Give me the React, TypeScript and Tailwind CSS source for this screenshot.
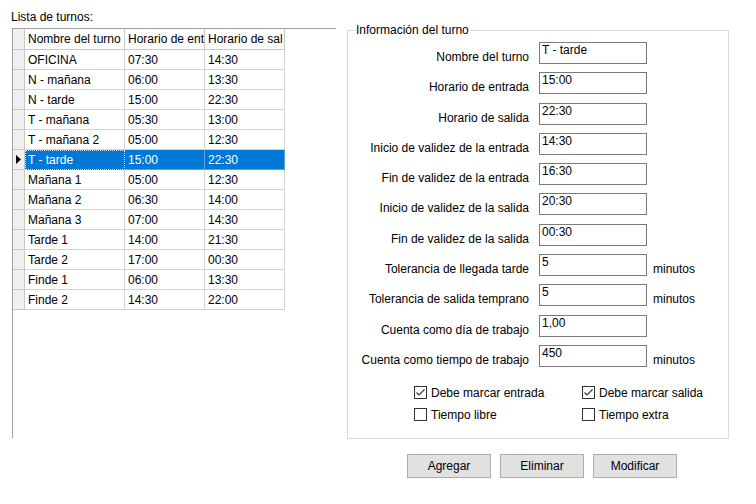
import React from "react";

const rows: [string, string, string][] = [
  ["OFICINA", "07:30", "14:30"],
  ["N - mañana", "06:00", "13:30"],
  ["N - tarde", "15:00", "22:30"],
  ["T - mañana", "05:30", "13:00"],
  ["T - mañana 2", "05:00", "12:30"],
  ["T - tarde", "15:00", "22:30"],
  ["Mañana 1", "05:00", "12:30"],
  ["Mañana 2", "06:30", "14:00"],
  ["Mañana 3", "07:00", "14:30"],
  ["Tarde 1", "14:00", "21:30"],
  ["Tarde 2", "17:00", "00:30"],
  ["Finde 1", "06:00", "13:30"],
  ["Finde 2", "14:30", "22:00"],
];

const fields: [string, string, boolean][] = [
  ["Nombre del turno", "T - tarde", false],
  ["Horario de entrada", "15:00", false],
  ["Horario de salida", "22:30", false],
  ["Inicio de validez de la entrada", "14:30", false],
  ["Fin de validez de la entrada", "16:30", false],
  ["Inicio de validez de la salida", "20:30", false],
  ["Fin de validez de la salida", "00:30", false],
  ["Tolerancia de llegada tarde", "5", true],
  ["Tolerancia de salida temprano", "5", true],
  ["Cuenta como día de trabajo", "1,00", false],
  ["Cuenta como tiempo de trabajo", "450", true],
];

function Check({ checked, label }: { checked: boolean; label: string }) {
  return (
    <div className="flex items-center h-[16px]">
      <div className="w-[13px] h-[13px] border border-[#333333] bg-white flex items-center justify-center">
        {checked && (
          <svg width="11" height="11" viewBox="0 0 11 11">
            <polyline points="1.5,5.5 4,8 9.5,2.5" fill="none" stroke="#333333" strokeWidth="1.1" />
          </svg>
        )}
      </div>
      <span className="ml-[4px] whitespace-nowrap">{label}</span>
    </div>
  );
}

export default function App() {
  return (
    <div className="w-[756px] h-[504px] bg-white flex font-['Liberation_Sans',Arial,sans-serif] text-[12px] leading-[14px] text-black overflow-hidden">
      {/* Left column */}
      <div className="w-[347px] pl-[11px] pt-[10px] flex flex-col">
        <div className="h-[14px] whitespace-nowrap">Lista de turnos:</div>
        <div className="mt-[4px] ml-[1px] w-[324px] h-[410px] border-t border-l border-[#a0a0a0] flex flex-col">
          {/* header */}
          <div className="flex h-[21px]">
            <div className="w-[12px] bg-[#f0f0f0] border-r border-b border-[#c8c8c8]" />
            <div className="w-[100px] border-r border-b border-[#c8c8c8] pl-[3px] flex items-center overflow-hidden whitespace-nowrap">Nombre del turno</div>
            <div className="w-[80px] border-r border-b border-[#c8c8c8] pl-[3px] flex items-center overflow-hidden whitespace-nowrap">Horario de ent</div>
            <div className="w-[80px] border-r border-b border-[#c8c8c8] pl-[3px] flex items-center overflow-hidden whitespace-nowrap">Horario de sal</div>
          </div>
          {rows.map((r, i) => {
            const sel = i === 5;
            return (
              <div key={i} className="flex h-[20px]">
                <div className="w-[12px] bg-[#f0f0f0] border-r border-b border-[#c8c8c8] flex items-center justify-center">
                  {sel && (
                    <svg width="5" height="9" viewBox="0 0 5 9">
                      <polygon points="0,0 5,4.5 0,9" fill="#000" />
                    </svg>
                  )}
                </div>
                <div
                  className={
                    sel
                      ? "w-[100px] bg-[#0078d7] text-white border border-dotted border-[#cfe4f7] pl-[2px] flex items-center whitespace-nowrap overflow-hidden"
                      : "w-[100px] border-r border-b border-[#d4d4d4] pl-[3px] flex items-center whitespace-nowrap overflow-hidden"
                  }
                >
                  {r[0]}
                </div>
                <div
                  className={
                    sel
                      ? "w-[80px] bg-[#0078d7] text-white border-r border-b border-[#5aa0e0] pl-[3px] flex items-center whitespace-nowrap"
                      : "w-[80px] border-r border-b border-[#d4d4d4] pl-[3px] flex items-center whitespace-nowrap"
                  }
                >
                  {r[1]}
                </div>
                <div
                  className={
                    sel
                      ? "w-[80px] bg-[#0078d7] text-white border-r border-b border-[#5aa0e0] pl-[3px] flex items-center whitespace-nowrap"
                      : "w-[80px] border-r border-b border-[#d4d4d4] pl-[3px] flex items-center whitespace-nowrap"
                  }
                >
                  {r[2]}
                </div>
              </div>
            );
          })}
        </div>
      </div>

      {/* Right column */}
      <div className="w-[382px] pt-[30px] flex flex-col">
        <div className="relative h-[409px] border border-[#dcdcdc] pt-[11px]">
          <span className="absolute left-[8px] -top-[8px] bg-white pr-[1px] whitespace-nowrap">Información del turno</span>
          <div className="flex flex-col gap-[8.3px]">
            {fields.map(([label, value, min], i) => (
              <div key={i} className="flex h-[22px] items-start">
                <div className="w-[181px] text-right pt-[8px] whitespace-nowrap">{label}</div>
                <div className="ml-[10px] w-[108px] h-[22px] border border-[#7a7a7a] pl-[2px] bg-white whitespace-nowrap">{value}</div>
                {min && <div className="ml-[6px] pt-[8px]">minutos</div>}
              </div>
            ))}
          </div>
          <div className="mt-[18px] pl-[66px] grid grid-cols-[168px_1fr] gap-y-[6px]">
            <Check checked label="Debe marcar entrada" />
            <Check checked label="Debe marcar salida" />
            <Check checked={false} label="Tiempo libre" />
            <Check checked={false} label="Tiempo extra" />
          </div>
        </div>
        <div className="mt-[15px] pl-[60px] flex gap-[9px]">
          <button className="w-[84px] h-[24px] bg-[#e1e1e1] border border-[#adadad] flex items-center justify-center">Agregar</button>
          <button className="w-[84px] h-[24px] bg-[#e1e1e1] border border-[#adadad] flex items-center justify-center">Eliminar</button>
          <button className="w-[84px] h-[24px] bg-[#e1e1e1] border border-[#adadad] flex items-center justify-center">Modificar</button>
        </div>
      </div>
    </div>
  );
}
